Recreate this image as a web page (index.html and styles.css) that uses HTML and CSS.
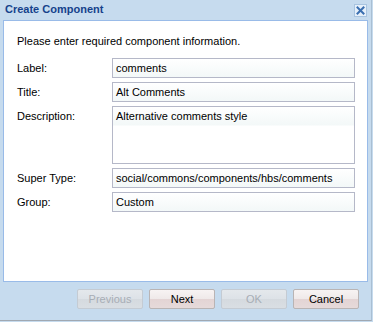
FILE: index.html
```html
<!DOCTYPE html>
<html>
<head>
<meta charset="utf-8">
<link rel="stylesheet" href="styles.css">
</head>
<body>
<div class="win">
  <div class="head">
    <span class="title">Create Component</span>
    <span class="close"><svg width="11" height="11" viewBox="0 0 11 11"><path d="M2.5 2.5 L8.5 8.5 M8.5 2.5 L2.5 8.5" stroke="#3a6fb0" stroke-width="2" stroke-linecap="square"/></svg></span>
  </div>
  <div class="panel">
    <p class="intro">Please enter required component information.</p>
    <div class="form">
      <label class="lbl">Label:</label>
      <div class="field">comments</div>
      <label class="lbl">Title:</label>
      <div class="field">Alt Comments</div>
      <label class="lbl">Description:</label>
      <div class="field area">Alternative comments style</div>
      <label class="lbl">Super Type:</label>
      <div class="field">social/commons/components/hbs/comments</div>
      <label class="lbl">Group:</label>
      <div class="field">Custom</div>
    </div>
  </div>
  <div class="foot">
    <button class="btn dis">Previous</button>
    <button class="btn">Next</button>
    <button class="btn dis">OK</button>
    <button class="btn">Cancel</button>
  </div>
</div>
</body>
</html>
```
FILE: styles.css
```css
html, body {
  margin: 0;
  padding: 0;
  background: #c6dbee;
}
.win {
  width: 372px;
  height: 321px;
  box-sizing: border-box;
  border-right: 1px solid #a9bfd3;
  border-bottom: 1px solid #a0a8b2;
  display: flex;
  flex-direction: column;
  font-family: "Liberation Sans", Arial, sans-serif;
  font-size: 11px;
  line-height: 13px;
  color: #000;
}
.head {
  height: 20px;
  display: flex;
  align-items: flex-start;
  justify-content: space-between;
  padding: 0 4px 0 5px;
}
.title {
  font-weight: bold;
  color: #15428b;
  margin-top: 3px;
}
.close {
  width: 13px;
  height: 13px;
  margin-top: 4px;
  box-sizing: border-box;
  border: 1px solid #a8c4e0;
  background: #e6f0fa;
  display: flex;
  align-items: center;
  justify-content: center;
}
.panel {
  margin: 0 3px 0 3px;
  height: 262px;
  box-sizing: border-box;
  background: #fff;
  border: 1px solid #99bbe8;
  padding: 14px 12px 0 13px;
}
.intro {
  margin: 0 0 10px 0;
}
.form {
  display: grid;
  grid-template-columns: 95px 243px;
  row-gap: 4px;
}
.lbl {
  padding-top: 4px;
}
.field {
  height: 20px;
  box-sizing: border-box;
  border: 1px solid #b5b8c8;
  background: linear-gradient(#ffffff, #f3f8f8);
  padding: 3px 3px 0 3px;
  white-space: nowrap;
  overflow: hidden;
}
.field.area {
  height: 58px;
  background: linear-gradient(#ffffff 0, #f3f8f8 18px, #ffffff 19px);
}
.foot {
  display: flex;
  justify-content: flex-end;
  gap: 6px;
  padding: 7px 12px 0 0;
}
.btn {
  width: 66px;
  height: 20px;
  font-family: inherit;
  font-size: 11px;
  padding: 0;
  border: 1px solid #b9b4b4;
  border-radius: 2px;
  background: linear-gradient(#f7f3f3 0, #efe9e9 50%, #e3d4d4 51%, #e6dada 100%);
  color: #000;
}
.btn.dis {
  color: #a7adb5;
  border-color: #c4cbd3;
  background: linear-gradient(#e4e8ec 0, #dde2e7 50%, #d5dadf 51%, #d9dee3 100%);
}
```
